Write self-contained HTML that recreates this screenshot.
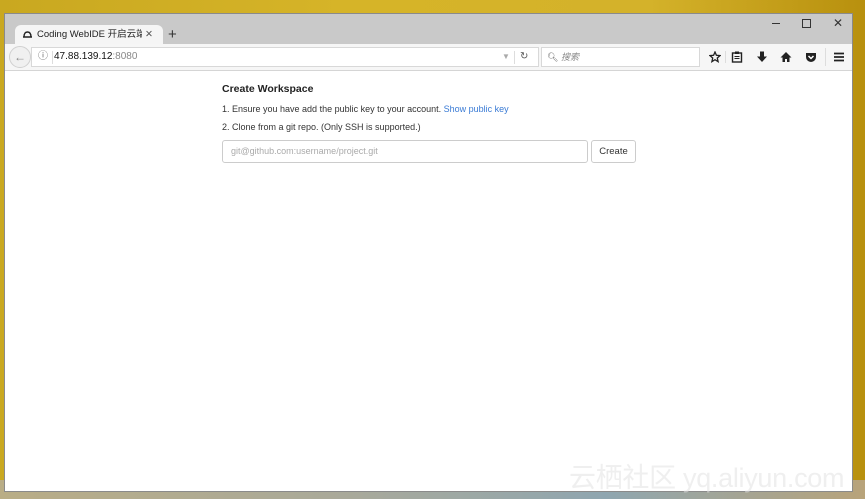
<!DOCTYPE html>
<html><head><meta charset="utf-8"><style>
body{margin:0;width:865px;height:499px;overflow:hidden;position:relative;font-family:"Liberation Sans","Noto Sans CJK SC",sans-serif;
background:linear-gradient(90deg,#c9a820 0%,#d6b428 40%,#d4b22a 75%,#b8900e 100%);}
.bot{position:absolute;left:0;right:0;top:480px;bottom:0;background:linear-gradient(90deg,#b9ad86,#a9a99a 40%,#8fa6b0 70%,#b8a37a);}
.win{position:absolute;left:4px;top:13px;width:849px;height:479px;background:#fff;border:1px solid #8a8a8a;box-sizing:border-box;}
.tabbar{position:absolute;left:0;top:0;right:0;height:30px;background:#c9c9c9;}
.tab{position:absolute;left:10px;top:11px;width:148px;height:20px;background:#f5f5f5;border-radius:6px 6px 0 0;font-size:9.5px;color:#222;line-height:20px;}
.tb{position:absolute;left:0;right:0;top:30px;height:26px;background:#f6f6f6;border-bottom:1px solid #d5d5d5;}
.url{position:absolute;left:26px;top:3px;width:508px;height:20px;background:#fff;border:1px solid #d8d8d8;box-sizing:border-box;font-size:10px;line-height:18px;}
.search{position:absolute;left:536px;top:3px;width:159px;height:20px;background:#fff;border:1px solid #d8d8d8;box-sizing:border-box;font-size:9px;line-height:18px;color:#888;font-style:italic;}
.ic{position:absolute;top:7px;}
.c{position:absolute;font-size:9px;color:#333;}
</style></head><body>
<div class="bot"></div>
<div class="win">
 <div class="tabbar">
  <div class="tab"><svg style="position:absolute;left:7px;top:6px" width="11" height="8" viewBox="0 0 11 8"><path d="M1 6 L10 6 M2 6 Q2 1 5.5 1 Q9 1 9 6" fill="none" stroke="#222" stroke-width="1.4"/></svg><span style="position:absolute;left:22px;white-space:nowrap;width:105px;overflow:hidden">Coding WebIDE 开启云端开发</span><span style="position:absolute;left:130px;color:#555">✕</span></div>
  <div style="position:absolute;left:163px;top:12px;font-size:15px;color:#333">+</div>
  <div style="position:absolute;left:767px;top:9px;width:8px;border-top:1px solid #333"></div>
  <div style="position:absolute;left:797px;top:5px;width:7px;height:7px;border:1px solid #333"></div>
  <div style="position:absolute;left:828px;top:2px;font-size:12px;color:#333">✕</div>
 </div>
 <div class="tb">
  <div style="position:absolute;left:4px;top:2px;width:22px;height:22px;border-radius:50%;background:#f0f0f0;border:1px solid #d0d0d0;box-sizing:border-box;font-size:12px;color:#888;text-align:center;line-height:20px">←</div>
  <div class="url"><span style="position:absolute;left:6px;top:0;color:#666;font-size:10px">ⓘ</span><span style="position:absolute;left:20px;top:3px;height:13px;border-left:1px solid #ddd"></span><span style="position:absolute;left:22px;color:#111">47.88.139.12<span style="color:#888">:8080</span></span><span style="position:absolute;left:470px;color:#aaa;font-size:8px">▼</span><span style="position:absolute;left:482px;top:3px;height:13px;border-left:1px solid #ddd"></span><span style="position:absolute;left:488px;color:#555">↻</span></div>
  <div class="search"><span style="position:absolute;left:5px;color:#666;font-style:normal">🔍︎</span><span style="position:absolute;left:19px">搜索</span></div>
  <svg class="ic" style="left:704px" width="12" height="12" viewBox="0 0 12 12"><path d="M6 1 L7.4 4.3 L11 4.6 L8.3 7 L9.1 10.6 L6 8.7 L2.9 10.6 L3.7 7 L1 4.6 L4.6 4.3 Z" fill="none" stroke="#222" stroke-width="1.3"/></svg>
  <div style="position:absolute;left:720px;top:7px;height:12px;border-left:1px solid #ddd"></div>
  <svg class="ic" style="left:726px" width="12" height="12" viewBox="0 0 12 12"><rect x="1.5" y="2" width="9" height="9" fill="none" stroke="#222" stroke-width="1.4"/><rect x="4" y="0.5" width="4" height="2.5" fill="#222"/><path d="M3.5 5.5h5M3.5 7.5h5" stroke="#222"/></svg>
  <svg class="ic" style="left:751px" width="12" height="12" viewBox="0 0 12 12"><path d="M4 0.5h4v5h3L6 11 1 5.5h3z" fill="#222"/></svg>
  <svg class="ic" style="left:775px" width="12" height="12" viewBox="0 0 12 12"><path d="M6 1 L11.5 6.5 H9.5 V11 H7 V8 H5 V11 H2.5 V6.5 H0.5 Z" fill="#222"/></svg>
  <svg class="ic" style="left:800px" width="12" height="12" viewBox="0 0 12 12"><path d="M1 2h10v4a5 5 0 0 1-10 0z" fill="#222"/><path d="M3.5 5l2.5 2.5L8.5 5" fill="none" stroke="#fff" stroke-width="1.5"/></svg>
  <div style="position:absolute;left:820px;top:4px;height:18px;border-left:1px solid #ddd"></div>
  <svg class="ic" style="left:828px" width="12" height="12" viewBox="0 0 12 12"><path d="M1 2.5h10M1 6h10M1 9.5h10" stroke="#222" stroke-width="1.8"/></svg>
 </div>
 <div class="c" style="left:217px;top:69px;font-size:10.5px;font-weight:bold;color:#222">Create Workspace</div>
 <div class="c" style="left:217px;top:90px">1. Ensure you have add the public key to your account. <span style="color:#3a7bd5">Show public key</span></div>
 <div class="c" style="left:217px;top:108px">2. Clone from a git repo. (Only SSH is supported.)</div>
 <div style="position:absolute;left:217px;top:126px;width:366px;height:23px;border:1px solid #ccc;border-radius:3px;box-sizing:border-box;font-size:9px;color:#aaa;line-height:21px;padding-left:8px">git@github.com:username/project.git</div>
 <div style="position:absolute;left:586px;top:126px;width:45px;height:23px;border:1px solid #ccc;border-radius:3px;box-sizing:border-box;font-size:9.5px;color:#333;line-height:21px;text-align:center">Create</div>
 <div style="position:absolute;left:564px;top:442px;font-size:27px;color:rgba(225,225,225,0.55);white-space:nowrap;letter-spacing:-0.3px">云栖社区 yq.aliyun.com</div>
</div>
</body></html>
